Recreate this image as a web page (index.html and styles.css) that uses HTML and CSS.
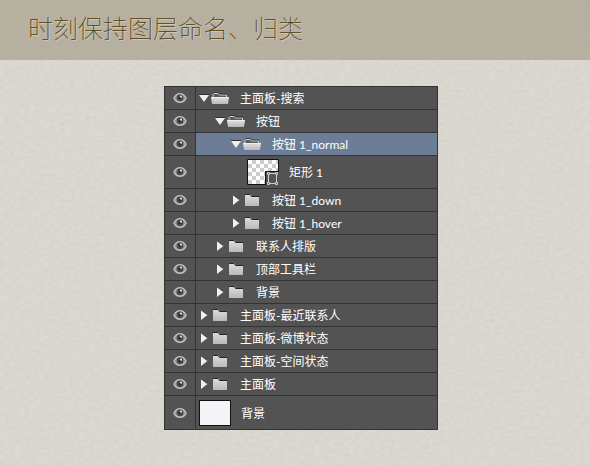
FILE: index.html
```
<!DOCTYPE html>
<html lang="zh-CN">
<head>
  <meta charset="UTF-8" />
  <meta name="viewport" content="width=device-width, initial-scale=1.0"/>
  <title>时刻保持图层命名、归类</title>
  <link rel="stylesheet" href="styles.css">
</head>
<body>
  <!-- Shared icons -->
  <svg class="sprite" aria-hidden="true">
    <defs>
      <linearGradient id="metal" x1="0" y1="0" x2="0" y2="1">
        <stop offset="0" stop-color="#dedede"/>
        <stop offset="1" stop-color="#b9b9b9"/>
      </linearGradient>
      <symbol id="eye" viewBox="0 0 14 12">
        <path d="M1 6.2C2.3 3.2 4.4 1.700 7 1.700s4.700 1.500 6 4.500c-1.300 2.700-3.400 4.100-6 4.100S2.300 8.900 1 6.200z" fill="#8a8a8a" stroke="#bdbdbd" stroke-width="1.500"/>
        <circle cx="7" cy="5.700" r="3.200" fill="#3a3a3a"/>
        <circle cx="7" cy="5.900" r="2.100" fill="#262626" stroke="#777" stroke-width=".6"/>
        <circle cx="8" cy="4.700" r="1.100" fill="#e4e4e4"/>
      </symbol>
      <symbol id="arrow-down" viewBox="0 0 10 8">
        <path d="M0 1h10L5 8z" fill="#f0f0f0"/>
        <path d="M0 .5h10" stroke="#333"/>
      </symbol>
      <symbol id="arrow-right" viewBox="0 0 10 10">
        <path d="M2 0v10l6.500-5z" fill="#f0f0f0"/>
        <path d="M2 0l6 4.500" stroke="#333" stroke-width=".6"/>
      </symbol>
      <symbol id="folder-open" viewBox="0 0 18 12">
        <path d="M2 7V2.500L3 1.500h4l1.500 1.500H15.500V7z" fill="#5c5c5c" stroke="#cfcfcf"/>
        <path d="M2.500.5h5L9 2h7" fill="none" stroke="#303030" stroke-width=".8"/>
        <path d="M0 5.500h18l-1 6.500H1z" fill="url(#metal)"/>
        <path d="M0 5.500h18" stroke="#efefef"/>
      </symbol>
      <symbol id="folder" viewBox="0 0 18 12">
        <path d="M2 0h5l2 2h7v10H2z" fill="url(#metal)"/>
        <path d="M2 .5h5L8.500 2.500H16" fill="none" stroke="#252525"/>
      </symbol>
    </defs>
  </svg>

  <header class="header">
    <h1 class="title">时刻保持图层命名、归类</h1>
  </header>

  <main class="content">
    <ul class="layers">
      <li class="layer">
        <button class="eye" aria-label="显示"><svg><use href="#eye"/></svg></button>
        <div class="item">
          <button class="toggle" aria-label="收起"><svg><use href="#arrow-down"/></svg></button>
          <svg class="folder"><use href="#folder-open"/></svg>
          <span class="name">主面板-搜索</span>
        </div>
      </li>
      <li class="layer">
        <button class="eye" aria-label="显示"><svg><use href="#eye"/></svg></button>
        <div class="item level-1">
          <button class="toggle" aria-label="收起"><svg><use href="#arrow-down"/></svg></button>
          <svg class="folder"><use href="#folder-open"/></svg>
          <span class="name">按钮</span>
        </div>
      </li>
      <li class="layer selected">
        <button class="eye" aria-label="显示"><svg><use href="#eye"/></svg></button>
        <div class="item level-2">
          <button class="toggle" aria-label="收起"><svg><use href="#arrow-down"/></svg></button>
          <svg class="folder"><use href="#folder-open"/></svg>
          <span class="name">按钮 1_normal</span>
        </div>
      </li>
      <li class="layer">
        <button class="eye" aria-label="显示"><svg><use href="#eye"/></svg></button>
        <div class="item shape">
          <svg class="thumb" viewBox="0 0 32 26">
            <defs>
              <pattern id="checker" x="1" y="1" width="8" height="8" patternUnits="userSpaceOnUse">
                <path d="M0 0h8v8H0z" fill="#fff"/>
                <path d="M4 0h4v4H4zM0 4h4v4H0z" fill="#ccc"/>
              </pattern>
            </defs>
            <path d="M.5.5h31v12h-13v13H.5z" fill="url(#checker)" stroke="#111"/>
            <path d="M18 12h14v14H19z" fill="#535353"/>
            <path d="M18.500 26V12.500H32" fill="none" stroke="#111"/>
            <path d="M21.500 15v9M29.500 15v9M21 14.500h9M21 24.500h9" stroke="#d0d0d0"/>
            <path d="M20.500 13.500h2v2h-2zM28.500 13.500h2v2h-2zM20.500 23.500h2v2h-2zM28.500 23.500h2v2h-2z" fill="#535353" stroke="#d0d0d0"/>
          </svg>
          <span class="name">矩形 1</span>
        </div>
      </li>
      <li class="layer">
        <button class="eye" aria-label="显示"><svg><use href="#eye"/></svg></button>
        <div class="item level-2">
          <button class="toggle" aria-label="展开"><svg><use href="#arrow-right"/></svg></button>
          <svg class="folder"><use href="#folder"/></svg>
          <span class="name">按钮 1_down</span>
        </div>
      </li>
      <li class="layer">
        <button class="eye" aria-label="显示"><svg><use href="#eye"/></svg></button>
        <div class="item level-2">
          <button class="toggle" aria-label="展开"><svg><use href="#arrow-right"/></svg></button>
          <svg class="folder"><use href="#folder"/></svg>
          <span class="name">按钮 1_hover</span>
        </div>
      </li>
      <li class="layer">
        <button class="eye" aria-label="显示"><svg><use href="#eye"/></svg></button>
        <div class="item level-1">
          <button class="toggle" aria-label="展开"><svg><use href="#arrow-right"/></svg></button>
          <svg class="folder"><use href="#folder"/></svg>
          <span class="name">联系人排版</span>
        </div>
      </li>
      <li class="layer">
        <button class="eye" aria-label="显示"><svg><use href="#eye"/></svg></button>
        <div class="item level-1">
          <button class="toggle" aria-label="展开"><svg><use href="#arrow-right"/></svg></button>
          <svg class="folder"><use href="#folder"/></svg>
          <span class="name">顶部工具栏</span>
        </div>
      </li>
      <li class="layer">
        <button class="eye" aria-label="显示"><svg><use href="#eye"/></svg></button>
        <div class="item level-1">
          <button class="toggle" aria-label="展开"><svg><use href="#arrow-right"/></svg></button>
          <svg class="folder"><use href="#folder"/></svg>
          <span class="name">背景</span>
        </div>
      </li>
      <li class="layer">
        <button class="eye" aria-label="显示"><svg><use href="#eye"/></svg></button>
        <div class="item">
          <button class="toggle" aria-label="展开"><svg><use href="#arrow-right"/></svg></button>
          <svg class="folder"><use href="#folder"/></svg>
          <span class="name">主面板-最近联系人</span>
        </div>
      </li>
      <li class="layer">
        <button class="eye" aria-label="显示"><svg><use href="#eye"/></svg></button>
        <div class="item">
          <button class="toggle" aria-label="展开"><svg><use href="#arrow-right"/></svg></button>
          <svg class="folder"><use href="#folder"/></svg>
          <span class="name">主面板-微博状态</span>
        </div>
      </li>
      <li class="layer">
        <button class="eye" aria-label="显示"><svg><use href="#eye"/></svg></button>
        <div class="item">
          <button class="toggle" aria-label="展开"><svg><use href="#arrow-right"/></svg></button>
          <svg class="folder"><use href="#folder"/></svg>
          <span class="name">主面板-空间状态</span>
        </div>
      </li>
      <li class="layer">
        <button class="eye" aria-label="显示"><svg><use href="#eye"/></svg></button>
        <div class="item">
          <button class="toggle" aria-label="展开"><svg><use href="#arrow-right"/></svg></button>
          <svg class="folder"><use href="#folder"/></svg>
          <span class="name">主面板</span>
        </div>
      </li>
      <li class="layer">
        <button class="eye" aria-label="显示"><svg><use href="#eye"/></svg></button>
        <div class="item background">
          <div class="thumb solid"></div>
          <span class="name">背景</span>
        </div>
      </li>
    </ul>
  </main>
</body>
</html>
```

FILE: styles.css
```
body {
  margin: 0;
  min-height: 100vh;
  background-color: #dcd9d2;
  /* paper grain */
  background-image: url("data:image/svg+xml,%3Csvg xmlns='http://www.w3.org/2000/svg' width='300' height='300'%3E%3Cfilter id='n' x='0' y='0' width='100%25' height='100%25'%3E%3CfeTurbulence type='fractalNoise' baseFrequency='.2 .3' numOctaves='4' stitchTiles='stitch'/%3E%3CfeColorMatrix values='0 0 0 0 .4 0 0 0 0 .38 0 0 0 0 .33 .25 0 0 0 -.08'/%3E%3C/filter%3E%3Crect width='300' height='300' filter='url(%23n)'/%3E%3C/svg%3E");
  color: #fff;
  font-family: Lato, "Noto Sans CJK SC", sans-serif;
  font-size: 12px;
}

.sprite {
  position: absolute;
  width: 0;
  height: 0;
}

.header {
  padding: 9px 28px 15px;
  background-color: rgba(160, 150, 128, 0.6);
}

.title {
  margin: 0;
  color: #4f3c0a;
  font-family: "Noto Sans CJK SC", sans-serif;
  font-size: 25px;
  font-weight: 100;
  line-height: 36px;
  text-shadow: 1px 1px 0 rgba(255, 255, 255, 0.35);
}

.content {
  display: flex;
  justify-content: center;
  padding: 26px 0 36px 12px;
}

.layers {
  width: 46%;
  min-width: 274px;
  box-sizing: border-box;
  margin: 0;
  padding: 0;
  list-style: none;
  background-color: #535353;
  border: 1px solid #333;
  border-bottom: none;
}

.layer {
  display: flex;
  border-bottom: 1px solid #333;
}

.eye {
  display: flex;
  align-items: center;
  justify-content: center;
  width: 31px;
  padding: 0;
  background: none;
  border: none;
  border-right: 1px solid #333;
  cursor: pointer;
}

.eye svg {
  width: 14px;
  height: 12px;
}

.item {
  flex: 1;
  display: flex;
  align-items: center;
  min-height: 22px;
  padding-left: 3px;
}

.level-1 {
  padding-left: 19px;
}

.level-2 {
  padding-left: 35px;
}

.selected .item {
  background-color: #6c7d95;
}

.toggle {
  width: 10px;
  height: 10px;
  margin-right: 2px;
  padding: 0;
  background: none;
  border: none;
  cursor: pointer;
}

.toggle svg {
  display: block;
  width: 10px;
  height: 10px;
}

.folder {
  width: 18px;
  height: 12px;
  margin-right: 11px;
}

.name {
  padding-top: 2px;
  line-height: 18px;
}

.shape {
  min-height: 32px;
  padding-left: 51px;
}

.background {
  min-height: 33px;
}

.thumb {
  width: 32px;
  height: 26px;
  margin-right: 10px;
}

.solid {
  box-sizing: border-box;
  background-color: #f2f4f7;
  border: 1px solid #111;
}
```
